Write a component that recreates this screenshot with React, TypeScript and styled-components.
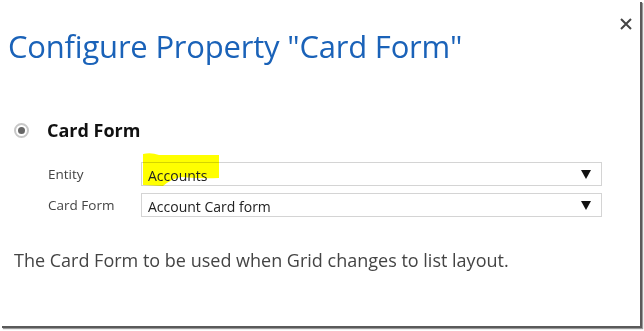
import styled, { createGlobalStyle } from "styled-components";

const GlobalStyle = createGlobalStyle`
  html, body {
    margin: 0;
    padding: 0;
    background: #ffffff;
    font-family: "Open Sans", "Noto Sans", sans-serif;
  }
`;

const Frame = styled.div`
  width: 644px;
  height: 331px;
  background: #ffffff;
  overflow: hidden;
`;

const Dialog = styled.div`
  position: relative;
  width: 640px;
  height: 326px;
  background: #ffffff;
  box-shadow: 2px 2px 0 0 #5a5a5a, 3px 3px 1px 0 #9a9a9a;
  display: flex;
  flex-direction: column;
`;

const Header = styled.div`
  display: flex;
  justify-content: space-between;
  align-items: flex-start;
  padding: 26px 8px 0 8px;
`;

const Title = styled.h1`
  margin: 0;
  font-size: 31px;
  font-weight: 400;
  line-height: 40px;
  color: #1a62b8;
  letter-spacing: -0.2px;
`;

const CloseButton = styled.button`
  border: none;
  background: none;
  padding: 0;
  margin-top: -8px;
  width: 12px;
  height: 12px;
  cursor: pointer;
  display: flex;
`;

const Section = styled.div`
  display: flex;
  align-items: center;
  gap: 18px;
  padding: 52px 0 0 14px;
`;

const Radio = styled.span`
  width: 15px;
  height: 15px;
  border-radius: 50%;
  border: 2px solid #c8c8c8;
  box-sizing: border-box;
  display: flex;
  align-items: center;
  justify-content: center;

  &::after {
    content: "";
    width: 7px;
    height: 7px;
    border-radius: 50%;
    background: #666666;
  }
`;

const SectionTitle = styled.div`
  font-size: 18px;
  font-weight: 700;
  color: #111111;
`;

const Fields = styled.div`
  display: grid;
  grid-template-columns: 93px 461px;
  row-gap: 7px;
  padding: 20px 0 0 48px;
  align-items: center;
`;

const Label = styled.label`
  font-size: 13.5px;
  color: #444444;
`;

const Select = styled.div`
  position: relative;
  height: 24px;
  border: 1px solid #d4d4d4;
  box-sizing: border-box;
  display: flex;
  align-items: center;
  justify-content: space-between;
  padding: 0 10px 0 6px;
  font-size: 14px;
  color: #222222;
`;

const SelectValue = styled.span`
  position: relative;
  z-index: 1;
  padding-top: 2px;
`;

const Arrow = styled.span`
  width: 0;
  height: 0;
  border-left: 5px solid transparent;
  border-right: 5px solid transparent;
  border-top: 9px solid #111111;
`;

const Highlight = styled.svg`
  position: absolute;
  left: -1px;
  top: -11px;
  mix-blend-mode: multiply;
`;

const Description = styled.p`
  margin: 0;
  padding: 31px 0 0 14px;
  font-size: 18px;
  color: #444444;
`;

export default function App() {
  return (
    <>
      <GlobalStyle />
      <Frame>
        <Dialog>
          <Header>
            <Title>Configure Property "Card Form"</Title>
            <CloseButton aria-label="Close">
              <svg width="12" height="12" viewBox="0 0 12 12">
                <path d="M1 1 L11 11 M11 1 L1 11" stroke="#444" strokeWidth="2" />
              </svg>
            </CloseButton>
          </Header>
          <Section>
            <Radio />
            <SectionTitle>Card Form</SectionTitle>
          </Section>
          <Fields>
            <Label>Entity</Label>
            <Select>
              <Highlight width="80" height="36" viewBox="0 0 80 36">
                <path
                  d="M2 2 Q10 0 18 3 L78 3 L78 26 Q60 27 40 25 Q30 27 22 34 L2 33 Z"
                  fill="#ffff00"
                />
              </Highlight>
              <SelectValue>Accounts</SelectValue>
              <Arrow />
            </Select>
            <Label>Card Form</Label>
            <Select>
              <SelectValue>Account Card form</SelectValue>
              <Arrow />
            </Select>
          </Fields>
          <Description>The Card Form to be used when Grid changes to list layout.</Description>
        </Dialog>
      </Frame>
    </>
  );
}
